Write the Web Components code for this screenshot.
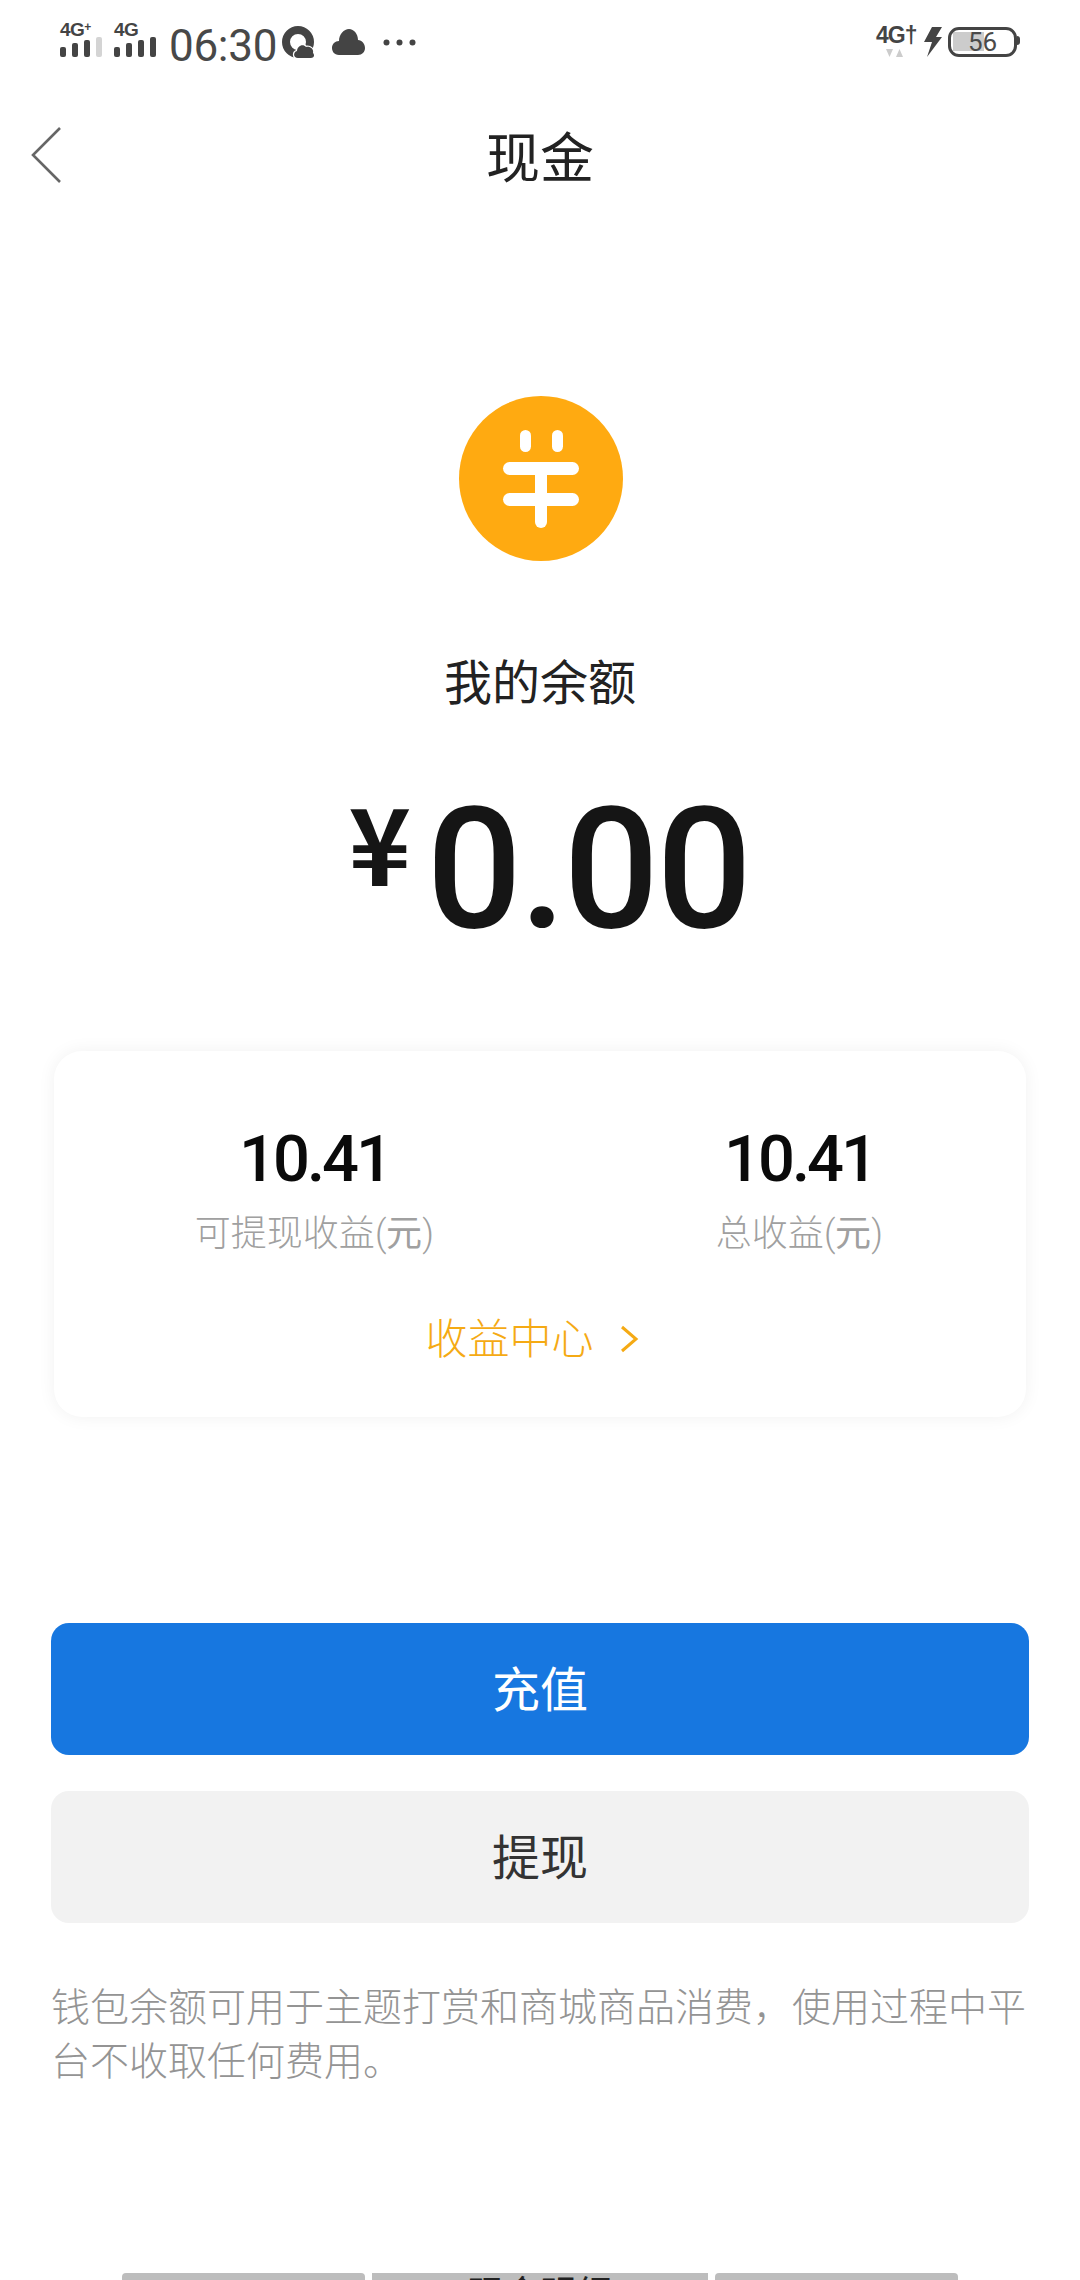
<!DOCTYPE html>
<html lang="zh-CN"><head><meta charset="utf-8"><title>现金</title>
<style>
html,body{margin:0;padding:0;background:#fff}
body{width:1080px;height:2280px;overflow:hidden;display:flex;flex-direction:column;font-family:"Noto Sans CJK SC","Noto Sans",sans-serif;color:#222}
</style></head><body>
<status-bar></status-bar>
<nav-bar>现金</nav-bar>
<coin-icon></coin-icon>
<balance-block label="我的余额" amount="0.00"></balance-block>
<earn-card></earn-card>
<action-button kind="primary">充值</action-button>
<action-button kind="secondary">提现</action-button>
<note-text>钱包余额可用于主题打赏和商城商品消费，使用过程中平台不收取任何费用。</note-text>
<bottom-tabs></bottom-tabs>
<script>
function def(name,html,init){
  customElements.define(name,class extends HTMLElement{
    constructor(){super();this.attachShadow({mode:'open'}).innerHTML=typeof html==='function'?html(this):html;}
    connectedCallback(){if(init)init(this,this.shadowRoot);}
  });
}
const bars=(on)=>`<svg width="42" height="20" viewBox="0 0 42 20">${[[0,10],[12,14],[24,17],[36,20]].map((b,i)=>`<rect x="${b[0]}" y="${20-b[1]}" width="6" height="${b[1]}" rx="2" fill="${i<on?'#444':'#d4d4d4'}"/>`).join('')}</svg>`;
def('status-bar',`<style>
:host{display:flex;height:72px;box-sizing:border-box;padding:23px 60px 0;color:#444;font-family:Roboto,"Liberation Sans",sans-serif;align-items:flex-start}
.sig{display:flex;flex-direction:column;width:42px;height:34px;justify-content:space-between}
.sig b{font:700 19px/14px "Liberation Sans",sans-serif;letter-spacing:-.6px;height:14px;display:block}
.sig b sup{font-size:12px;line-height:0;vertical-align:5px}
.sig + .sig{margin-left:12px}
.time{font:400 44px/36px Roboto,sans-serif;margin:5px 0 0 13px;width:113px;letter-spacing:-.3px;color:#484848}
svg{display:block}
.q{margin:3px 0 0 0}.cl{margin:6px 0 0 16px}.dots{margin:16px 0 0 18px}
.right{margin-left:auto;display:flex;align-items:flex-start;margin-right:0}
.lte{width:38px;margin-top:3px;position:relative}
.lte b{font:700 23px/19px "Liberation Sans",sans-serif;letter-spacing:-1px;display:block;height:19px;white-space:nowrap}
.bolt{margin:4px 0 0 10px}
.bat{margin:4px 0 0 6px;width:69px;height:30px;box-sizing:border-box;border:3.5px solid #444;border-radius:11px;display:flex;justify-content:center;align-items:center;font:400 26px/23px Roboto,sans-serif;color:#4a4a4a;padding:2px;background:linear-gradient(#ccc,#ccc) 2px 2px/31px 19px no-repeat;background-origin:padding-box}
.nub{margin:13px 0 0 0;width:3px;height:9px;background:#444;border-radius:0 3px 3px 0}
</style>
<div class="sig"><b>4G<sup>+</sup></b>${bars(3)}</div>
<div class="sig"><b>4G</b>${bars(4)}</div>
<div class="time">06:30</div>
<svg class="q" width="34" height="33" viewBox="0 0 34 33"><circle cx="16" cy="16" r="12" fill="none" stroke="#444" stroke-width="8"/><path d="M16 32c-5 0-5-6-1-7 0-5 6-8 9-4 4-1 8 2 7 6 2 2 1 5-2 5z" fill="#444" stroke="#fff" stroke-width="2.500" paint-order="stroke"/></svg>
<svg class="cl" width="33" height="26" viewBox="0 0 33 26"><path d="M7 26C2 26 0 22 0 19c0-4 3-7 7-7 0-7 5-12 10-12s9 5 9 11c4 0 7 4 7 8s-3 7-7 7z" fill="#444"/></svg>
<svg class="dots" width="33" height="7" viewBox="0 0 33 7"><circle cx="3.5" cy="3.5" r="3" fill="#444"/><circle cx="16.5" cy="3.5" r="3" fill="#444"/><circle cx="29.5" cy="3.5" r="3" fill="#444"/></svg>
<div class="right">
<div class="lte"><b>4G†</b><svg width="38" height="10" viewBox="0 0 38 10" style="margin-top:3px"><path d="M10 1h7l-3.500 8zM20 9h7l-3.500-8z" fill="#ccc"/></svg></div>
<svg class="bolt" width="18" height="30" viewBox="0 0 18 30"><path d="M8 0h10l-6 10h6L3 30l5-15H0z" fill="#444"/></svg>
<div class="bat">56</div><div class="nub"></div>
</div>`);
def('nav-bar',`<style>
:host{display:flex;height:166px;align-items:center;justify-content:center;position:relative;font-size:54px;font-weight:400;color:#222;line-height:70px}
svg{position:absolute;left:30px;top:54px}
</style><svg width="32" height="58" viewBox="0 0 32 58"><path d="M30 2L3 29l27 27" fill="none" stroke="#666" stroke-width="2.600"/></svg><slot></slot>`);
def('coin-icon',`<style>:host{display:flex;justify-content:center;margin:158px 0 0 2px}svg{display:block}</style>
<svg width="164" height="165" viewBox="0 0 164 165"><ellipse cx="82" cy="82.500" rx="82" ry="82.500" fill="#ffaa11"/><g fill="#fff"><rect x="61" y="34" width="11" height="22" rx="5.500"/><rect x="93" y="34" width="11" height="22" rx="5.500"/><rect x="44" y="66" width="76" height="13" rx="6.500"/><rect x="44" y="97" width="76" height="13" rx="6.500"/><rect x="76" y="70" width="12" height="62" rx="6"/></g></svg>`);
def('balance-block',e=>`<style>
:host{display:block;margin-top:86px}
.l{text-align:center;font-size:48px;line-height:64px;color:#222}
.a{display:flex;justify-content:center;margin:75px 0 0 0;height:265px;color:#151515;padding-left:26px}
.y{font:700 106px/1 "Noto Sans CJK SC",sans-serif;width:64px;margin-right:14px;height:100px;margin-top:1px;margin-left:-8px;color:#151515}
.n{font:500 168px/168px Roboto,sans-serif;letter-spacing:-2.500px}
</style><div class="l">${e.getAttribute('label')}</div><div class="a"><span class="y">¥</span><span class="n">${e.getAttribute('amount')}</span></div>`);
def('stat-item',e=>`<style>
:host{display:block;text-align:center;flex:0 0 485px}
.v{font:500 65px/70px Roboto,sans-serif;color:#0a0a0a;letter-spacing:-3px}
.c{font-size:36px;line-height:50px;color:#a0a0a0;margin-top:11px;font-weight:300}
.c span{font-family:Roboto,sans-serif;font-weight:300}
</style><div class="v">${e.getAttribute('value')}</div><div class="c">${e.getAttribute('caption')}<span>(元)</span></div>`);
def('earn-card',`<style>
:host{display:block;margin:0 54px;height:366px;box-sizing:border-box;border-radius:28px;background:#fff;box-shadow:0 0 18px rgba(0,0,0,.06);padding-top:73px}
.row{display:flex;padding-left:18px;width:954px}
.link{display:flex;justify-content:center;align-items:center;color:#f5aa14;font-size:42px;line-height:60px;margin-top:47px;gap:26px;margin-right:16px;font-weight:300}
svg{margin-top:5px}
</style><div class="row"><stat-item value="10.41" caption="可提现收益"></stat-item><stat-item value="10.41" caption="总收益"></stat-item></div>
<div class="link"><span>收益中心</span><svg width="19" height="28" viewBox="0 0 19 28"><path d="M2 2l14 12L2 26" fill="none" stroke="#f5aa14" stroke-width="3"/></svg></div>`);
def('action-button',`<style>
:host{display:flex;align-items:center;justify-content:center;margin:0 51px;height:132px;border-radius:18px;font-size:48px;box-sizing:border-box;padding-bottom:7px;font-weight:400}
:host([kind=primary]){background:#1777e0;color:#fff;margin-top:206px}
:host([kind=secondary]){background:#f2f2f2;color:#333;margin-top:36px}
</style><slot></slot>`);
def('note-text',`<style>:host{display:block;margin:54px 51px 0;font-size:39px;line-height:54px;color:#949494;width:978px;font-weight:300}</style><slot></slot>`);
def('bottom-tabs',`<style>
:host{display:flex;height:7px;margin-top:auto;padding-left:122px;gap:7px;overflow:hidden}
i{display:block;height:7px;background:#bdbdbd;border-radius:4px 4px 0 0;overflow:hidden}
.m{width:336px;text-align:center;font:400 36px/50px "Noto Sans CJK SC",sans-serif;color:#222;font-style:normal;border-radius:0}
.m span{display:block;margin-top:-7px}
</style><i style="width:243px"></i><i class="m"><span>现金明细</span></i><i style="width:243px"></i>`);
</script>
</body></html>
